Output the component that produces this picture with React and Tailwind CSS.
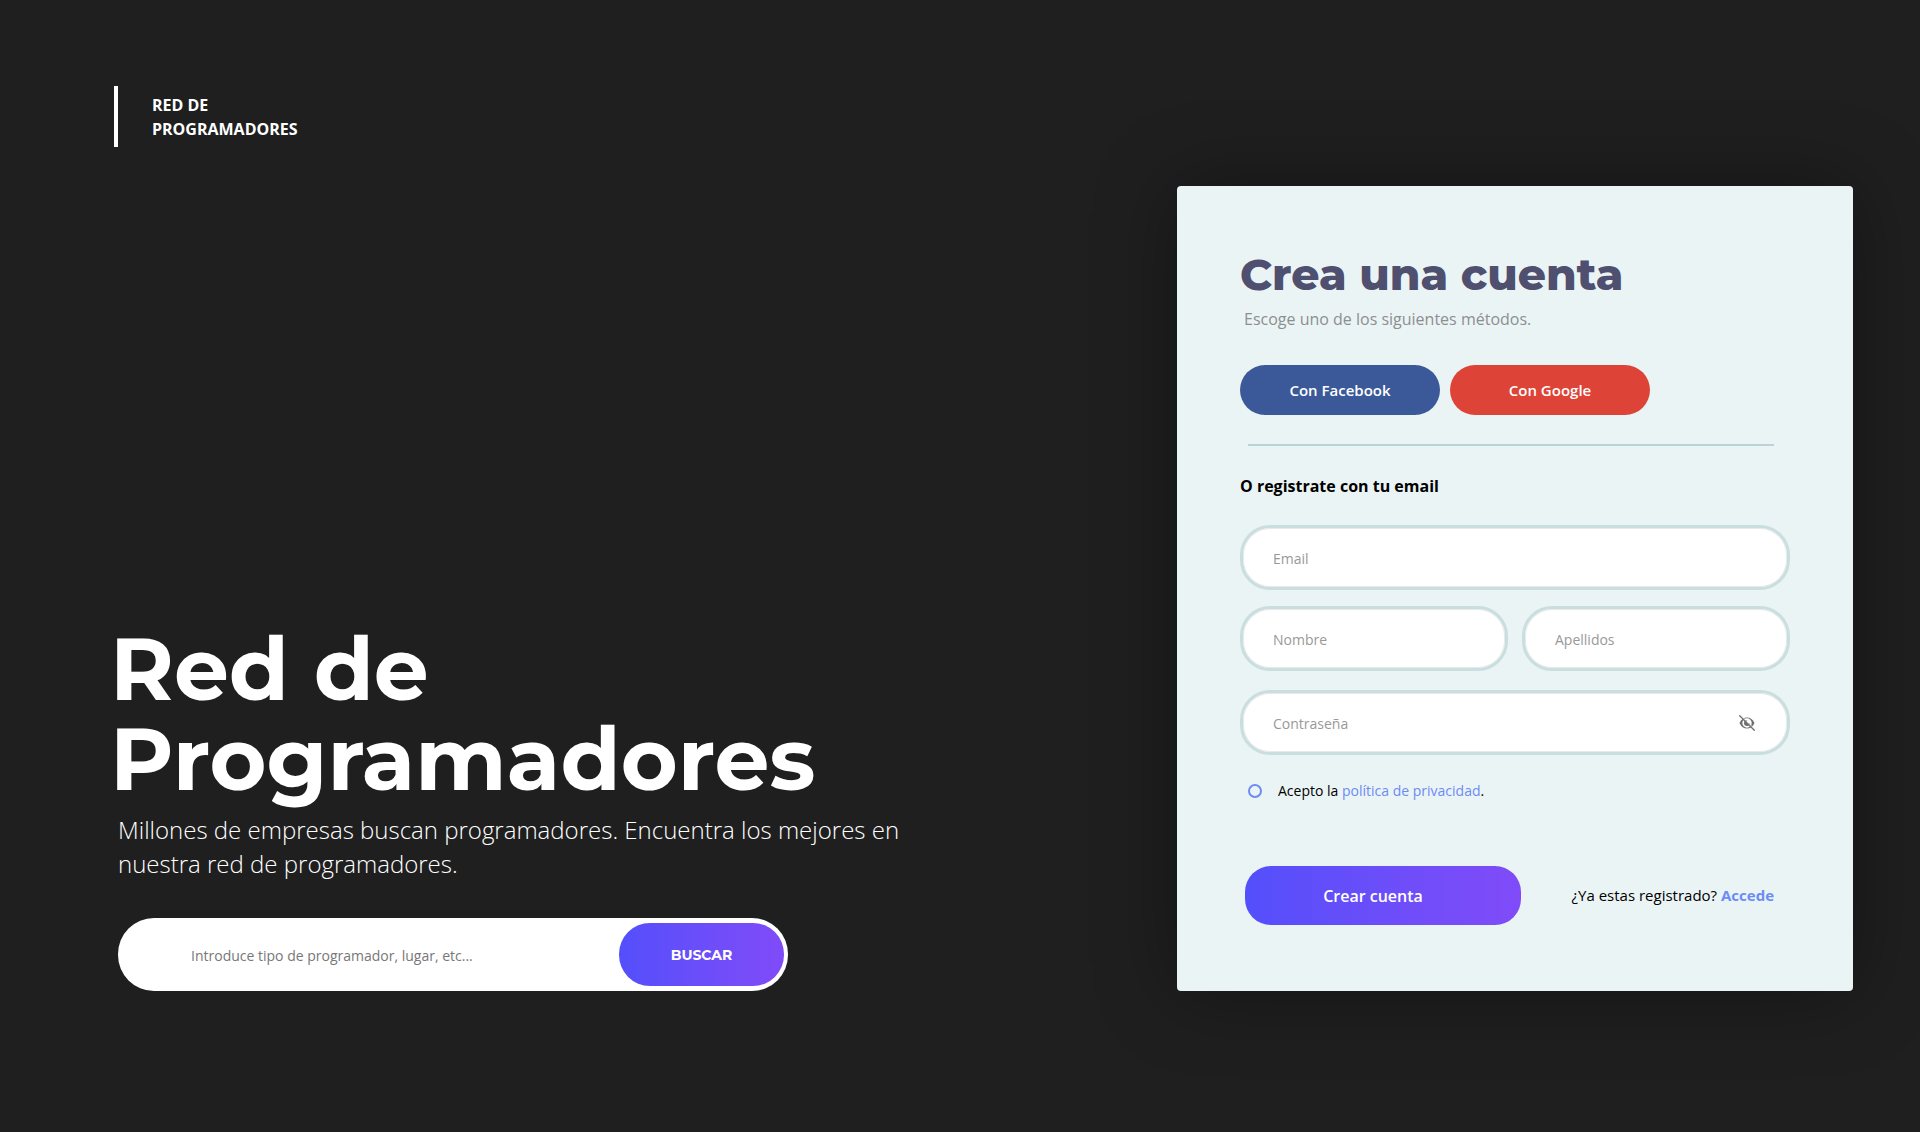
import React, { useState } from "react";

function HiddenEyeIcon() {
  return (
    <svg viewBox="0 0 16 16" className="size-4" fill="none" stroke="#6f6f6f" aria-hidden="true">
      <path
        fill="#6f6f6f"
        stroke="none"
        fillRule="evenodd"
        d="M0.5 8C2.2 4.2 4.8 2.4 8 2.4S13.800 4.200 15.500 8C13.800 11.800 11.200 13.600 8 13.600S2.200 11.800 0.500 8ZM8 3.300A4.700 4.700 0 1 0 8 12.700A4.700 4.700 0 1 0 8 3.300Z"
      />
      <path fill="#6f6f6f" stroke="none" d="M8 5A3 3 0 1 0 11 8C10.500 8.900 8.200 8.400 8 7.200C7.900 6.300 8.400 5.500 8 5Z" />
      <path stroke="#ffffff" strokeWidth="1" d="M1.400 0L16 14.600" />
      <path strokeWidth="1.300" d="M0.300 0.300L15.700 15.700" />
    </svg>
  );
}

function Field({ id, label, type = "text", children }) {
  return (
    <div className="flex h-[65px] min-w-0 items-center rounded-[30px] border-3 border-[#c9dedf] bg-white pr-8 pl-[30px] inset-ring inset-ring-[#e9e9e9]">
      <label htmlFor={id} className="sr-only">{label}</label>
      <input
        id={id}
        type={type}
        placeholder={label}
        className="h-full w-full min-w-0 bg-transparent pt-0.5 text-sm leading-6 text-black outline-none placeholder:text-[#999999]"
      />
      {children}
    </div>
  );
}

function SignUpCard() {
  const [visible, setVisible] = useState(false);
  return (
    <section className="w-[676px] shrink-0 self-end rounded bg-[#ebf4f5] px-[63px] pt-[59px] pb-[66px] shadow-[0_0_80px_rgba(0,0,0,0.36)]">
      <h2 className="font-['Montserrat','Inter',sans-serif] text-[44px] leading-[58px] font-extrabold text-[#4f4f70]">
        Crea una cuenta
      </h2>
      <p className="mt-1 pl-1 text-base leading-6 text-[#8b8f90]">Escoge uno de los siguientes métodos.</p>
      <div className="mt-[34px] flex gap-2.5">
        <button type="button" className="h-[50px] w-[200px] rounded-full bg-[#3b5998] text-[15px] font-semibold text-white">
          Con Facebook
        </button>
        <button type="button" className="h-[50px] w-[200px] rounded-full bg-[#dd4337] text-[15px] font-semibold text-white">
          Con Google
        </button>
      </div>
      <hr className="mt-[29px] mr-4 ml-2 border-t-2 border-[#bad3d6]" />
      <form onSubmit={(e) => e.preventDefault()}>
        <h3 className="mt-7 text-base leading-6 font-bold text-black">O registrate con tu email</h3>
        <div className="mt-[27px] grid grid-cols-2 gap-x-3.5 gap-y-4">
          <div className="col-span-2">
            <Field id="email" label="Email" type="email" />
          </div>
          <Field id="nombre" label="Nombre" />
          <Field id="apellidos" label="Apellidos" />
        </div>
        <div className="mt-[19px]">
          <Field id="contrasena" label="Contraseña" type={visible ? "text" : "password"}>
            <button type="button" aria-label="Mostrar contraseña" onClick={() => setVisible(!visible)}>
              <HiddenEyeIcon />
            </button>
          </Field>
        </div>
        <div className="mt-6 flex items-center gap-4 pl-2 text-sm leading-6">
          <input
            id="privacidad"
            type="checkbox"
            className="size-3.5 appearance-none rounded-full border-2 border-[#6c8bf5] checked:bg-[#6c8bf5]"
          />
          <label htmlFor="privacidad" className="text-black">
            Acepto la <a href="#privacidad" className="text-[#6c8bf5]">política de privacidad</a>.
          </label>
        </div>
        <div className="mt-[63px] flex items-center justify-between pr-4 pl-[5px]">
          <button type="submit" className="h-[59px] w-[276px] rounded-[26px] bg-linear-to-r from-[#534ffb] to-[#804bf8] pr-5 text-base font-semibold text-white">
            Crear cuenta
          </button>
          <p className="text-[15px] text-black">
            ¿Ya estas registrado? <a href="#accede" className="font-bold text-[#6c8bf5]">Accede</a>
          </p>
        </div>
      </form>
    </section>
  );
}

export default function App() {
  return (
    <div className="flex min-h-screen justify-between bg-[#1f1f1f] pt-[86px] pr-[67px] pb-[141px] pl-[110px] font-['Open_Sans',sans-serif]">
      <main className="flex flex-col justify-between text-white">
        <header className="ml-1 flex h-[61px] items-center border-l-4 border-white pl-[34px] text-base leading-6 font-bold">
          <p>
            RED DE
            <br />
            PROGRAMADORES
          </p>
        </header>
        <div>
          <h1 className="font-['Montserrat','Inter',sans-serif] text-[87px] leading-[90px] font-bold">
            Red de
            <br />
            Programadores
          </h1>
          <div className="mt-[9px] pl-2">
            <p className="max-w-[800px] text-2xl leading-[34px] font-light">
              Millones de empresas buscan programadores. Encuentra los mejores en nuestra red de programadores.
            </p>
            <form
              onSubmit={(e) => e.preventDefault()}
              className="mt-[37px] flex h-[73px] w-[670px] items-center rounded-[36px] bg-white pr-1 pl-[73px]"
            >
              <label htmlFor="buscar" className="sr-only">Buscar programadores</label>
              <input
                id="buscar"
                type="text"
                placeholder="Introduce tipo de programador, lugar, etc..."
                className="h-full min-w-0 flex-1 bg-transparent pt-0.5 text-sm leading-6 text-black outline-none placeholder:text-[#777777]"
              />
              <button
                type="submit"
                className="h-[63px] w-[165px] rounded-[31px] bg-linear-to-r from-[#534ffb] to-[#804bf8] font-['Montserrat','Inter',sans-serif] text-sm font-bold text-white"
              >
                BUSCAR
              </button>
            </form>
          </div>
        </div>
      </main>
      <SignUpCard />
    </div>
  );
}
